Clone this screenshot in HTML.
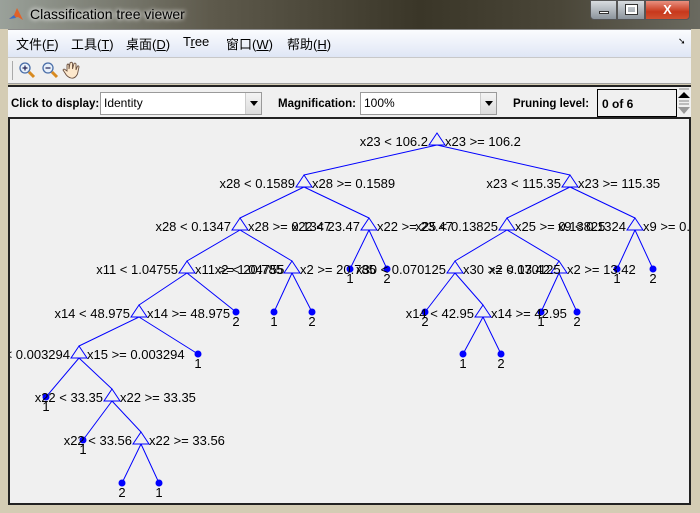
<!DOCTYPE html>
<html><head><meta charset="utf-8"><style>
*{margin:0;padding:0;box-sizing:border-box}
body{width:700px;height:513px;overflow:hidden;position:relative;background:#d4ccb4;font-family:"Liberation Sans","Noto Sans CJK SC",sans-serif}
.abs{position:absolute}
#title{left:0;top:0;width:700px;height:29px;background:linear-gradient(90deg,#9aa19a 0%,#5e5a4c 30%,#3a3628 60%,#4a4638 80%,#6a6a60 100%)}
#ttext{left:30px;top:6px;font-size:14px;color:#000;text-shadow:0 0 6px #fff,0 0 4px #fff}
#menu{left:8px;top:29px;width:683px;height:28px;background:linear-gradient(#fbfcfe,#dfe6f5);border-top:1px solid #8a8a8a}
#menu span{position:absolute;top:4px;font-size:13px;color:#000}
#tool{left:8px;top:57px;width:683px;height:27px;background:#f0f0f0;border-top:1px solid #c8c8c8;border-bottom:1px solid #a0a0a0}
#ctrl{left:8px;top:85px;width:683px;height:34px;background:#f0f0f0;border-top:2px solid #222;border-bottom:2px solid #222}
.lbl{position:absolute;top:11px;font-size:11.5px;font-weight:bold;white-space:nowrap}
.combo{position:absolute;top:5px;height:23px;background:#fff;border:1px solid #9a9a9a;font-size:12px;padding:3px 0 0 3px}
.arrow{position:absolute;right:0;top:0;width:16px;height:21px;background:linear-gradient(#f4f4f4,#dcdcdc);border-left:1px solid #ccc}
.arrow:after{content:"";position:absolute;left:4px;top:8px;border-left:4px solid transparent;border-right:4px solid transparent;border-top:5px solid #000}
#plot{left:8px;top:119px;width:683px;height:386px;background:#f0f0f0;border:2px solid #222;border-top:none}
</style></head><body>
<div id="title" class="abs"></div>
<svg class="abs" style="left:8px;top:6px" width="16" height="16"><path d="M1 13 L6 9 L9 2 L15 14 L10 11 Z" fill="#e0622a"/><path d="M1 13 L6 9 L8 12 Z" fill="#3a6fc8"/></svg>
<div id="ttext" class="abs">Classification tree viewer</div>
<div class="abs" style="left:590px;top:0;width:27px;height:20px;background:linear-gradient(#d8dce0,#8c949c);border:1px solid #555;border-radius:0 0 0 4px"><div style="position:absolute;left:8px;top:10px;width:10px;height:3px;background:#fff;border:1px solid #333"></div></div>
<div class="abs" style="left:617px;top:0;width:28px;height:20px;background:linear-gradient(#d8dce0,#8c949c);border:1px solid #555"><div style="position:absolute;left:8px;top:4px;width:11px;height:9px;border:2px solid #fff;outline:1px solid #333"></div></div>
<div class="abs" style="left:645px;top:0;width:45px;height:20px;background:linear-gradient(#e89080,#c8381c 60%,#d05030);border:1px solid #555;border-radius:0 0 4px 0;color:#fff;font-weight:bold;font-size:13px;text-align:center;line-height:18px">X</div>
<div id="menu" class="abs">
<span style="left:8px">文件(<u>F</u>)</span><span style="left:63px">工具(<u>T</u>)</span><span style="left:118px">桌面(<u>D</u>)</span><span style="left:175px">T<u>r</u>ee</span><span style="left:218px">窗口(<u>W</u>)</span><span style="left:279px">帮助(<u>H</u>)</span><span style="left:670px;font-size:9px;top:6px">➘</span>
</div>
<div id="tool" class="abs">
<div style="position:absolute;left:4px;top:3px;width:1px;height:19px;background:#aaa"></div>
<svg style="position:absolute;left:10px;top:3px" width="70" height="20">
<circle cx="7" cy="7" r="5" fill="#e8f0fa" stroke="#4a6ea8" stroke-width="1.3"/><path d="M4.5 7h5M7 4.5v5" stroke="#225" stroke-width="1.2"/><path d="M11 11l5 5" stroke="#d88a20" stroke-width="3"/>
<circle cx="30" cy="7" r="5" fill="#e8f0fa" stroke="#4a6ea8" stroke-width="1.3"/><path d="M27.5 7h5" stroke="#225" stroke-width="1.2"/><path d="M34 11l5 5" stroke="#d88a20" stroke-width="3"/>
<path d="M49 10 L49 4 Q50 2 51 4 L51 8 L52 2 Q53.5 0.5 54.5 2 L54.5 8 L56 2.5 Q57.5 1.5 58 3 L58 9 L59.5 5 Q61 4.5 61 6 L59.5 13 Q57 18 53 17 Q49 16 47 12 L45 9 Q45.5 7.5 47 8.5 Z" fill="#fde8cc" stroke="#6a5040" stroke-width="0.9"/>
</svg>
</div>
<div id="ctrl" class="abs">
<span class="lbl" style="left:3px">Click to display:</span>
<div class="combo" style="left:92px;width:162px">Identity<div class="arrow"></div></div>
<span class="lbl" style="left:270px">Magnification:</span>
<div class="combo" style="left:352px;width:137px">100%<div class="arrow"></div></div>
<span class="lbl" style="left:505px">Pruning level:</span>
<div style="position:absolute;left:589px;top:2px;width:80px;height:28px;border:1px solid #000;font-size:12px;font-weight:bold;padding:7px 0 0 4px">0 of 6</div>
<svg style="position:absolute;left:669px;top:1px" width="14" height="30"><path d="M2 1h10" stroke="#888"/><path d="M1 10 L7 4 L13 10Z" fill="#000"/><path d="M2 13h10M2 16h10" stroke="#888"/><path d="M1 19 L7 26 L13 19Z" fill="#999"/></svg>
</div>
<div id="plot" class="abs"></div>
<svg class="abs" style="left:0;top:0" width="700" height="513" font-family="Liberation Sans, sans-serif" font-size="13">
<defs><clipPath id="c"><rect x="10" y="119" width="679" height="384"/></clipPath></defs>
<g clip-path="url(#c)" stroke="#0000ff" stroke-width="1" fill="none">
<path d="M437 145L304 175M437 145L570 175M304 187L240 218M304 187L369 218M570 187L507 218M570 187L635 218M240 230L187 261M240 230L292 261M369 230L350 269M369 230L387 269M507 230L455 261M507 230L559 261M635 230L617 269M635 230L653 269M187 273L139 305M187 273L236 312M292 273L274 312M292 273L312 312M455 273L425 312M455 273L483 305M559 273L541 312M559 273L577 312M139 317L79 346M139 317L198 354M483 317L463 354M483 317L501 354M79 358L46 397M79 358L112 389M112 401L83 440M112 401L141 432M141 444L122 483M141 444L159 483"/>
<g>
<path d="M437 133l-8 12h16z"/><path d="M304 175l-8 12h16z"/><path d="M570 175l-8 12h16z"/><path d="M240 218l-8 12h16z"/><path d="M369 218l-8 12h16z"/><path d="M507 218l-8 12h16z"/><path d="M635 218l-8 12h16z"/><path d="M187 261l-8 12h16z"/><path d="M292 261l-8 12h16z"/><path d="M455 261l-8 12h16z"/><path d="M559 261l-8 12h16z"/><path d="M139 305l-8 12h16z"/><path d="M483 305l-8 12h16z"/><path d="M79 346l-8 12h16z"/><path d="M112 389l-8 12h16z"/><path d="M141 432l-8 12h16z"/>
</g>
<g fill="#0000ff" stroke="none">
<circle cx="350" cy="269" r="3.5"/><circle cx="387" cy="269" r="3.5"/><circle cx="617" cy="269" r="3.5"/><circle cx="653" cy="269" r="3.5"/><circle cx="236" cy="312" r="3.5"/><circle cx="274" cy="312" r="3.5"/><circle cx="312" cy="312" r="3.5"/><circle cx="425" cy="312" r="3.5"/><circle cx="541" cy="312" r="3.5"/><circle cx="577" cy="312" r="3.5"/><circle cx="198" cy="354" r="3.5"/><circle cx="463" cy="354" r="3.5"/><circle cx="501" cy="354" r="3.5"/><circle cx="46" cy="397" r="3.5"/><circle cx="83" cy="440" r="3.5"/><circle cx="122" cy="483" r="3.5"/><circle cx="159" cy="483" r="3.5"/>
</g>
<g fill="#000" stroke="none">
<g text-anchor="end">
<text x="428" y="146">x23 &lt; 106.2</text><text x="295" y="188">x28 &lt; 0.1589</text><text x="561" y="188">x23 &lt; 115.35</text><text x="231" y="231">x28 &lt; 0.1347</text><text x="360" y="231">x22 &lt; 23.47</text><text x="498" y="231">x25 &lt; 0.13825</text><text x="626" y="231">x9 &lt; 0.1324</text><text x="178" y="274">x11 &lt; 1.04755</text><text x="283" y="274">x2 &lt; 20.785</text><text x="446" y="274">x30 &lt; 0.070125</text><text x="550" y="274">x2 &lt; 13.42</text><text x="130" y="318">x14 &lt; 48.975</text><text x="474" y="318">x14 &lt; 42.95</text><text x="70" y="359">x15 &lt; 0.003294</text><text x="103" y="402">x22 &lt; 33.35</text><text x="132" y="445">x22 &lt; 33.56</text>
</g>
<g>
<text x="445" y="146">x23 &gt;= 106.2</text><text x="312" y="188">x28 &gt;= 0.1589</text><text x="578" y="188">x23 &gt;= 115.35</text><text x="248" y="231">x28 &gt;= 0.1347</text><text x="377" y="231">x22 &gt;= 23.47</text><text x="515" y="231">x25 &gt;= 0.13825</text><text x="643" y="231">x9 &gt;= 0.1324</text><text x="195" y="274">x11 &gt;= 1.04755</text><text x="300" y="274">x2 &gt;= 20.785</text><text x="463" y="274">x30 &gt;= 0.070125</text><text x="567" y="274">x2 &gt;= 13.42</text><text x="147" y="318">x14 &gt;= 48.975</text><text x="491" y="318">x14 &gt;= 42.95</text><text x="87" y="359">x15 &gt;= 0.003294</text><text x="120" y="402">x22 &gt;= 33.35</text><text x="149" y="445">x22 &gt;= 33.56</text>
</g>
<g text-anchor="middle">
<text x="350" y="283">1</text><text x="387" y="283">2</text><text x="617" y="283">1</text><text x="653" y="283">2</text><text x="236" y="326">2</text><text x="274" y="326">1</text><text x="312" y="326">2</text><text x="425" y="326">2</text><text x="541" y="326">1</text><text x="577" y="326">2</text><text x="198" y="368">1</text><text x="463" y="368">1</text><text x="501" y="368">2</text><text x="46" y="411">1</text><text x="83" y="454">1</text><text x="122" y="497">2</text><text x="159" y="497">1</text>
</g>
</g>
</g>
</svg>
</body></html>
